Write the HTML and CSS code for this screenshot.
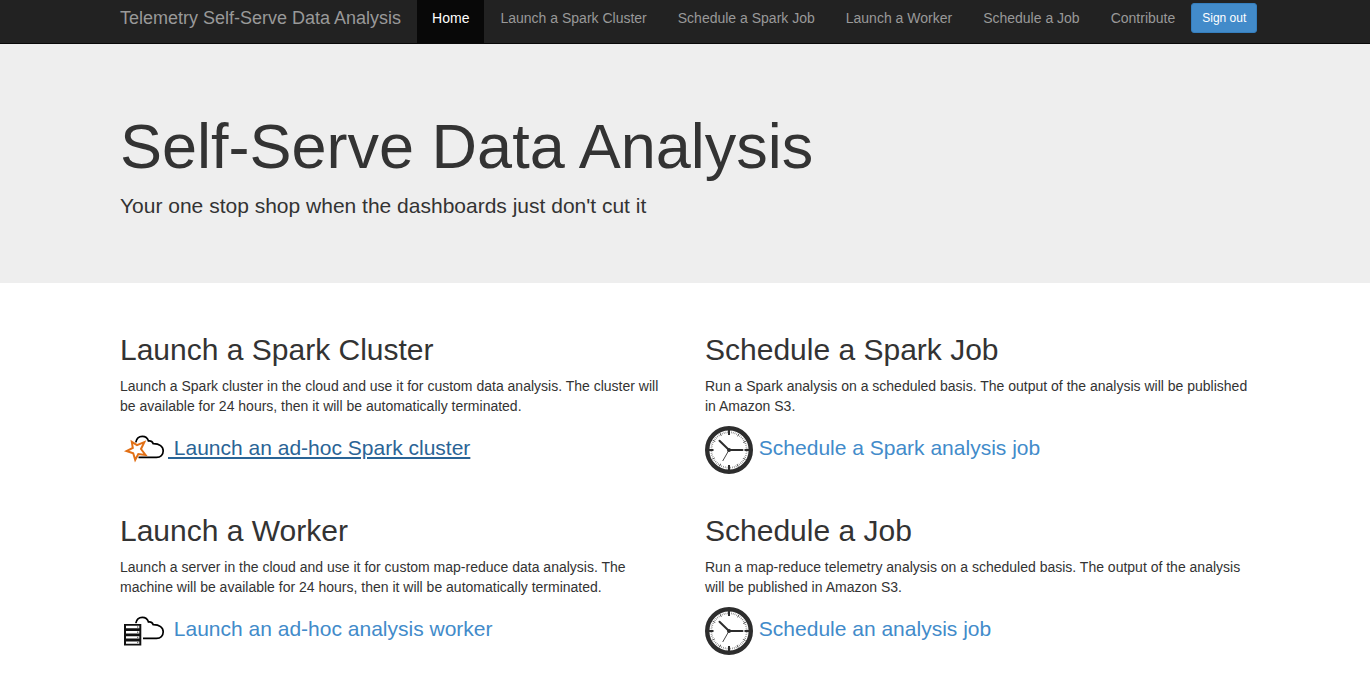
FILE: index.html
```html
<!DOCTYPE html>
<html lang="en">
<head>
<meta charset="utf-8">
<title>Telemetry Self-Serve Data Analysis</title>
<link rel="stylesheet" href="styles.css">
</head>
<body>
<svg class="defs" aria-hidden="true">
  <defs>
    <path id="cloud" d="M15.8 16.3C16.5 12.500 19 10.300 22.300 10.300C25.500 10.300 27.600 12 28.500 15C30.500 14.700 32.400 15.800 33.200 17.700C39.500 17.600 43.200 20.500 43.200 24.800C43.200 28.800 40.500 31.400 36.500 31.400H18.500" fill="none" stroke="#000" stroke-width="1.700"/>
    <g id="clock">
      <circle cx="24" cy="24" r="21.800" fill="#fff" stroke="#2d2d2d" stroke-width="4.400"/>
      <circle cx="24" cy="24" r="17.700" fill="none" stroke="#666" stroke-width="1.800" stroke-dasharray="0.6 1.254" stroke-dashoffset="0.3"/>
      <circle cx="24" cy="24" r="17.500" fill="none" stroke="#555" stroke-width="3" stroke-dasharray="0.8 8.363" stroke-dashoffset="0.4"/>
      <path d="M24 4V9M24 39V44M4 24H8.500M39.500 24H44" stroke="#2d2d2d" stroke-width="2"/>
      <path d="M24 24L17.700 35" stroke="#444" stroke-width="1"/>
      <path d="M14.500 14.700L24 24H37.500" fill="none" stroke="#2d2d2d" stroke-width="2" stroke-linecap="round"/>
      <circle cx="24" cy="24" r="2" fill="#2d2d2d"/>
    </g>
  </defs>
</svg>
<nav class="navbar">
  <div class="container navbar-row">
    <a class="brand" href="#">Telemetry Self-Serve Data Analysis</a>
    <ul class="nav">
      <li><a class="active" href="#">Home</a></li>
      <li><a href="#">Launch a Spark Cluster</a></li>
      <li><a href="#">Schedule a Spark Job</a></li>
      <li><a href="#">Launch a Worker</a></li>
      <li><a href="#">Schedule a Job</a></li>
      <li><a href="#">Contribute</a></li>
    </ul>
    <button class="sign-out" type="button">Sign out</button>
  </div>
</nav>
<header class="jumbotron">
  <div class="container">
    <h1>Self-Serve Data Analysis</h1>
    <p>Your one stop shop when the dashboards just don't cut it</p>
  </div>
</header>
<main class="container features">
  <section>
    <h2>Launch a Spark Cluster</h2>
    <p>Launch a Spark cluster in the cloud and use it for custom data analysis. The cluster will be available for 24 hours, then it will be automatically terminated.</p>
    <a class="action hovered" href="#"><svg class="icon" viewBox="0 0 48 48" aria-hidden="true"><use href="#cloud"/><path d="M11.800 15.800L17 19.200L24.300 16.200L21 23L25.500 29L18.300 28L15.200 33.800L13.200 27.300L6.600 25L12.800 22Z" fill="#fff" stroke="#e27016" stroke-width="2" stroke-linejoin="miter"/></svg><span class="label"> Launch an ad-hoc Spark cluster</span></a>
  </section>
  <section>
    <h2>Schedule a Spark Job</h2>
    <p>Run a Spark analysis on a scheduled basis. The output of the analysis will be published in Amazon S3.</p>
    <a class="action" href="#"><svg class="icon" viewBox="0 0 48 48" aria-hidden="true"><use href="#clock"/></svg><span class="label"> Schedule a Spark analysis job</span></a>
  </section>
  <section>
    <h2>Launch a Worker</h2>
    <p>Launch a server in the cloud and use it for custom map-reduce data analysis. The machine will be available for 24 hours, then it will be automatically terminated.</p>
    <a class="action" href="#"><svg class="icon" viewBox="0 0 48 48" aria-hidden="true"><use href="#cloud"/><rect x="2" y="16.500" width="21" height="23" fill="#fff"/><path d="M4 17H21.300V38.500H4Z" fill="#111"/><path d="M6 20H19.300M6 25.200H19.300M6 30.400H19.300M6 35.600H19.300" stroke="#fff" stroke-width="2.400"/><path d="M17 20H18.300M17 25.200H18.300M17 30.400H18.300M17 35.600H18.300" stroke="#777" stroke-width="1.500"/></svg><span class="label"> Launch an ad-hoc analysis worker</span></a>
  </section>
  <section>
    <h2>Schedule a Job</h2>
    <p>Run a map-reduce telemetry analysis on a scheduled basis. The output of the analysis will be published in Amazon S3.</p>
    <a class="action" href="#"><svg class="icon" viewBox="0 0 48 48" aria-hidden="true"><use href="#clock"/></svg><span class="label"> Schedule an analysis job</span></a>
  </section>
</main>
</body>
</html>
```
FILE: styles.css
```css
* {
  box-sizing: border-box;
}

body {
  margin: 0;
  background: #fff;
  color: #333;
  font: 14px/20px "Liberation Sans", Arial, sans-serif;
}

h1, h2, p, ul {
  margin: 0;
  padding: 0;
  font-weight: 400;
}

a {
  color: #428bca;
  text-decoration: none;
}

.defs {
  display: block;
  width: 0;
  height: 0;
}

.container {
  max-width: 1170px;
  margin: 0 auto;
  padding: 0 10px 0 20px;
}

.navbar {
  background: #222;
  border-bottom: 1px solid #080808;
}

.navbar-row {
  display: flex;
  align-items: flex-start;
  gap: 1px;
}

.brand {
  padding: 8px 15px 15px 0;
  font-size: 18px;
  color: #999;
}

.nav {
  display: flex;
  gap: 1px;
  list-style: none;
}

.nav a {
  display: block;
  padding: 8px 15px 15px;
  color: #999;
}

.nav .active {
  background: #080808;
  color: #fff;
}

.sign-out {
  height: 30px;
  margin-top: 3px;
  padding: 0 10px;
  border: 1px solid #357ebd;
  border-radius: 3px;
  background: #428bca;
  color: #fff;
  font: 12px/18px "Liberation Sans", Arial, sans-serif;
}

.jumbotron {
  padding: 71px 0 62px;
  background: #eee;
}

.jumbotron h1 {
  margin-bottom: 13px;
  font-size: 63px;
  line-height: 63px;
}

.jumbotron p {
  font-size: 21px;
  line-height: 30px;
}

.features {
  display: grid;
  grid-template-columns: repeat(auto-fit, minmax(400px, 1fr));
  gap: 40px 30px;
  padding-top: 50px;
  padding-bottom: 30px;
}

.features h2 {
  margin-bottom: 10px;
  font-size: 30px;
  line-height: 33px;
}

.features p {
  margin-bottom: 10px;
}

.action {
  display: inline-flex;
  align-items: center;
  vertical-align: top;
  font-size: 21px;
  line-height: 30px;
}

.icon {
  flex: none;
  width: 48px;
  height: 48px;
}

.label {
  padding-bottom: 4px;
  white-space: pre;
}

.hovered {
  color: #2a6496;
}

.hovered .label {
  text-decoration: underline;
}
```
